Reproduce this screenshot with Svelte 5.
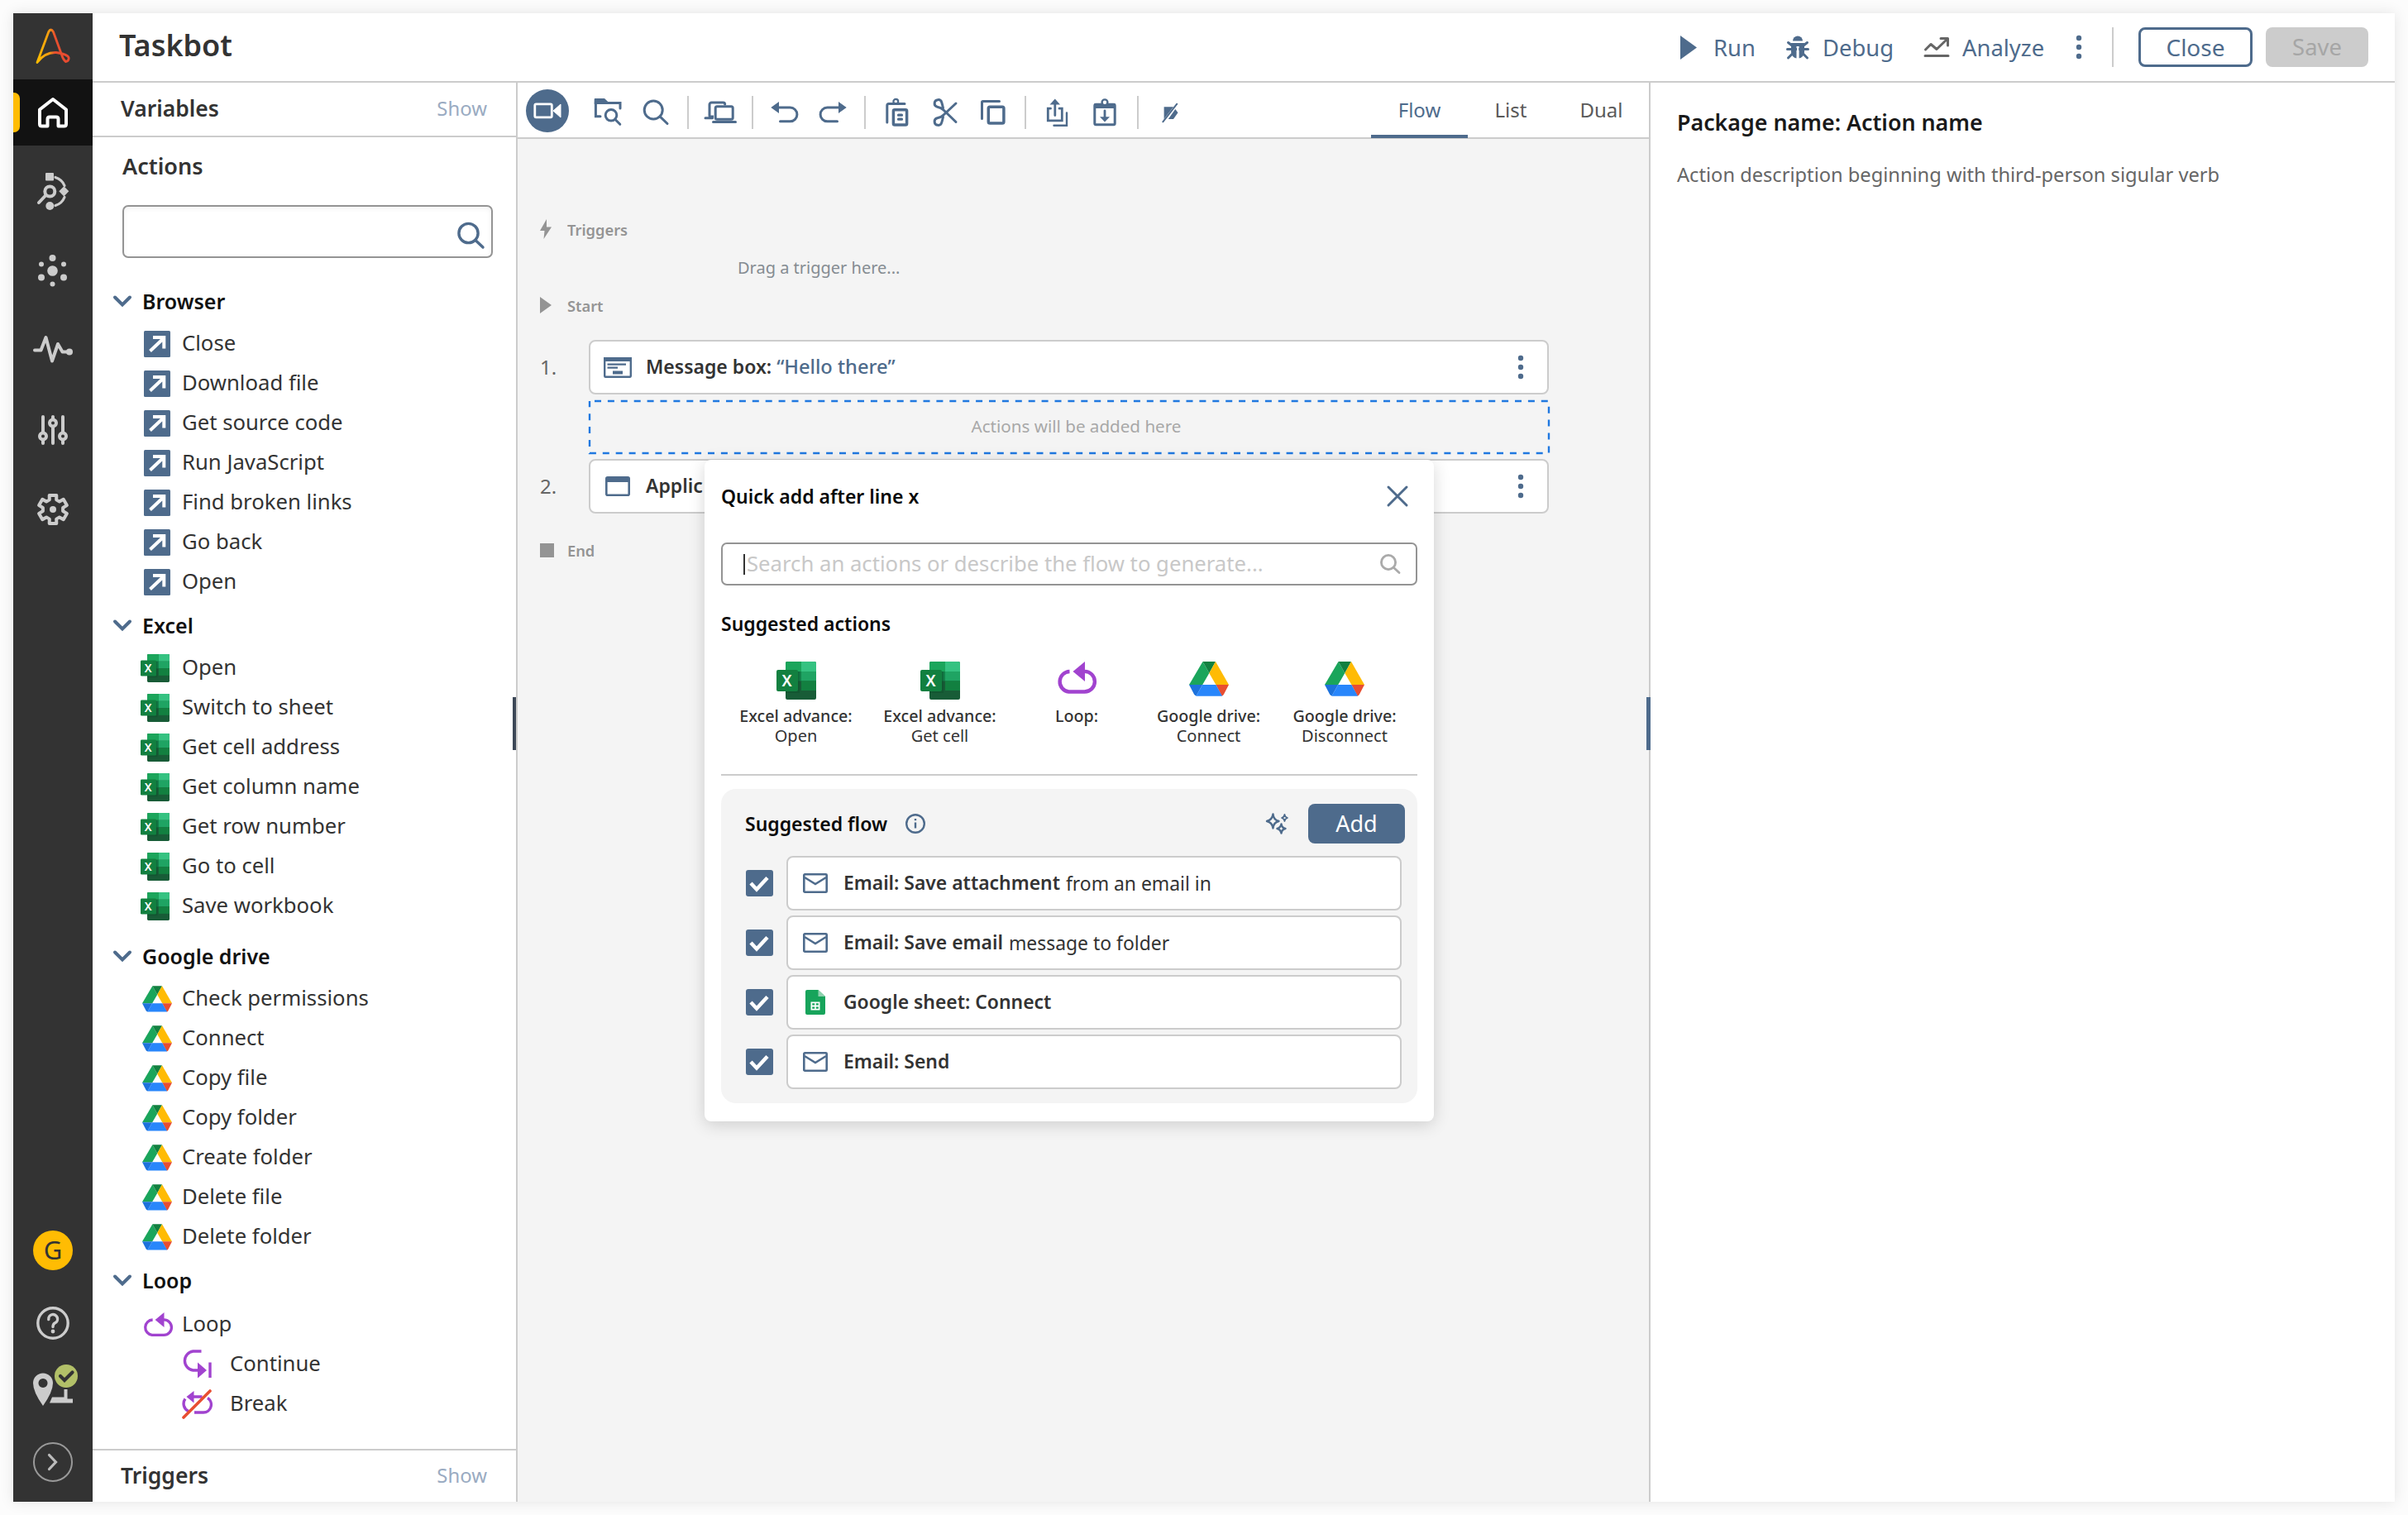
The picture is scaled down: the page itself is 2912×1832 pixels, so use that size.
<script lang="ts">
    type Group = { name: string; icon: string; items: string[] };

    const groups: Group[] = [
        {
            name: "Browser",
            icon: "browser",
            items: [
                "Close",
                "Download file",
                "Get source code",
                "Run JavaScript",
                "Find broken links",
                "Go back",
                "Open",
            ],
        },
        {
            name: "Excel",
            icon: "excel",
            items: [
                "Open",
                "Switch to sheet",
                "Get cell address",
                "Get column name",
                "Get row number",
                "Go to cell",
                "Save workbook",
            ],
        },
        {
            name: "Google drive",
            icon: "drive",
            items: [
                "Check permissions",
                "Connect",
                "Copy file",
                "Copy folder",
                "Create folder",
                "Delete file",
                "Delete folder",
            ],
        },
        { name: "Loop", icon: "loop", items: ["Loop", "Continue", "Break"] },
    ];

    const toolbar = [
        "folder", "search", "|", "devices", "|", "undo", "redo", "|",
        "paste", "cut", "copy", "|", "share", "import", "|", "novar",
    ];

    const suggestions = [
        { icon: "excel", pkg: "Excel advance:", action: "Open" },
        { icon: "excel", pkg: "Excel advance:", action: "Get cell" },
        { icon: "loop", pkg: "Loop:", action: "" },
        { icon: "drive", pkg: "Google drive:", action: "Connect" },
        { icon: "drive", pkg: "Google drive:", action: "Disconnect" },
    ];

    const flow = [
        { icon: "mail", title: "Email: Save attachment", rest: "from an email in" },
        { icon: "mail", title: "Email: Save email", rest: "message to folder" },
        { icon: "sheet", title: "Google sheet: Connect", rest: "" },
        { icon: "mail", title: "Email: Send", rest: "" },
    ];

    const tabs = ["Flow", "List", "Dual"];
    let activeTab = $state("Flow");
    let checked = $state([true, true, true, true]);

    // Six-toothed cog outline around (20, 21)
    const cog = Array.from({ length: 6 }, (_, i) => {
        const at = (r: number, deg: number) => {
            const a = ((i * 60 - 90 + deg) * Math.PI) / 180;
            return `${(20 + r * Math.cos(a)).toFixed(1)},${(21 + r * Math.sin(a)).toFixed(1)}`;
        };
        return [at(12.3, -20), at(17.6, -14), at(17.6, 14), at(12.3, 20)].join(" ");
    }).join(" ");
</script>

{#snippet excel()}
    <svg class="excel" viewBox="0 0 48 46" preserveAspectRatio="none">
        <rect x="11" width="37" height="46" rx="2" fill="#185c37" />
        <path d="M13 0H30V12H11V2a2 2 0 0 1 2-2z" fill="#1ba55b" />
        <path d="M30 0h16a2 2 0 0 1 2 2v10H30z" fill="#35c281" />
        <path d="M11 12h19v11.500H11z" fill="#13814a" />
        <path d="M30 12h18v11.500H30z" fill="#1fa463" />
        <path d="M30 23.500h18v11.500H30z" fill="#128040" />
        <path d="M11 12h17v26H11z" fill="#0c4a29" opacity="0.4" />
        <rect y="10" width="26" height="26" rx="2" fill="#128040" />
        <text x="12.500" y="30" text-anchor="middle">X</text>
    </svg>
{/snippet}

{#snippet drive()}
    <svg class="drive" viewBox="0 0 48 42">
        <path d="M16.500 0 24.300 14 16.200 28H0z" fill="#1aa55b" />
        <path d="M16.500 0H32L24.300 14z" fill="#128040" />
        <path d="M32 0 48 28H32.400L24.300 14z" fill="#ffbb04" />
        <path d="M32.400 28H48L42 39.500q-1 2-2.500 2z" fill="#e84e31" />
        <path d="M0 28H16.200L8.600 41.500Q7 41 6 39.500z" fill="#1d72dc" />
        <path d="M16.200 28H32.400L40 41.700H8.400z" fill="#2886fb" />
    </svg>
{/snippet}

{#snippet loop()}
    <svg class="loop" viewBox="0 0 48 40">
        <path class="line" d="M15.500 12A12.300 12.300 0 0 0 14.400 36.500H33.600a12.300 12.300 0 0 0 0-24.600H31" />
        <path d="M19.500 12 34 0V24z" />
    </svg>
{/snippet}

{#snippet dots()}
    <svg class="dots" viewBox="0 0 8 30" width="8" height="30">
        <circle cx="4" cy="4" r="3.200" />
        <circle cx="4" cy="15" r="3.200" />
        <circle cx="4" cy="26" r="3.200" />
    </svg>
{/snippet}

{#snippet actionIcon(name: string, item: string)}
    {#if name === "excel"}
        {@render excel()}
    {:else if name === "drive"}
        {@render drive()}
    {:else if name === "browser"}
        <svg viewBox="0 0 32 32" width="32" height="32">
            <rect width="32" height="32" rx="1.500" fill="#4e6b8c" />
            <path d="M7.500 24.500 24 9M11 8H24.300V21.500" fill="none" stroke="#fff" stroke-width="4" />
        </svg>
    {:else if item === "Continue"}
        <svg class="purple" viewBox="0 0 36 36" width="36" height="36">
            <path class="line" d="M23.500 2H13.500a11.600 11.600 0 0 0 0 23H20M34 15.500V34" />
            <path d="M19 15.500V34.500L30 25z" />
        </svg>
    {:else if item === "Break"}
        <svg class="purple" viewBox="0 0 36 36" width="36" height="36">
            <path class="line" d="M13 9H24.500M4 11.500a10 10 0 0 0 4 15M31 10.500a9.500 9.500 0 0 1-5 17.500H15" />
            <path d="M5.500 9 14.500 2V16.500z" />
            <path d="M2 34 34 2" stroke="#e84e31" stroke-width="3.600" stroke-linecap="round" />
        </svg>
    {:else}
        {@render loop()}
    {/if}
{/snippet}

{#snippet toolIcon(name: string)}
    <svg class="tool-icon" viewBox="0 0 36 36" width="36" height="36">
        {#if name === "folder"}
            <path d="M9 22.800H3.400V6.500H33V13" />
            <path class="solid" d="M1.700 2a1 1 0 0 1 1-1H14l4.200 4V8H1.700z" />
            <circle cx="22" cy="21.300" r="6.800" />
            <path d="M27 26.500 32.800 32.300" />
        {:else if name === "search"}
            <circle cx="15.200" cy="15" r="11" />
            <path d="M23 22.800 32 31.500" />
        {:else if name === "devices"}
            <path d="M5 22V8.500a2.500 2.500 0 0 1 2.500-2.500H21.500q2 0 2.200 2M0 24.700H8.500" />
            <rect x="12.200" y="10.800" width="21" height="15.500" rx="2" />
            <path d="M4 21.500h6v3H4z" class="solid" />
            <path d="M9.500 29.500H36.500" />
        {:else if name === "undo" || name === "redo"}
            <g transform={name === "redo" ? "matrix(-1 0 0 1 36 0)" : undefined}>
                <path d="M9 12H24.500a8.400 8.400 0 0 1 0 16.800H12.500" />
                <path class="solid" d="M1.300 12 11 5V19z" />
            </g>
        {:else if name === "paste"}
            <path d="M5.800 30V9.500q0-2 2-2H27" />
            <circle cx="16.300" cy="4.800" r="2.900" stroke-width="2.200" />
            <rect x="13.400" y="14.700" width="16.200" height="18.300" rx="1.500" stroke-width="3.500" />
            <path d="M19.500 21.200h4M19.500 26.200h4" stroke-width="3.200" />
        {:else if name === "cut"}
            <path d="M15.500 12.500Q14.500 8 13.800 6A4.400 4.400 0 1 0 8.500 11.300Q13 12 16 15L31 29.500" />
            <path d="M15.500 23.500Q14.500 28 13.800 30A4.400 4.400 0 1 1 8.500 24.700Q13 24 16 21L31 7" />
        {:else if name === "copy"}
            <path d="M4.500 25.500V5.800q0-1.300 1.300-1.300H25.500" />
            <rect x="12.300" y="11.300" width="18.600" height="19.800" rx="1.800" stroke-width="3.500" />
        {:else if name === "share"}
            <path d="M9.500 13.200H6.300V27.800H23.300V13.200H20M14.800 7V21.500" stroke-width="2.800" />
            <path d="M29 18.500V33.800H13.500" stroke-width="2.400" />
            <path class="solid" d="M8.500 8.500 14.800 1.500 21 8.500z" />
        {:else if name === "import"}
            <g transform="translate(-1 0)">
                <rect x="5.800" y="8.300" width="24.400" height="24.500" rx="1.500" />
                <path class="solid" d="M5 7.500h26V13H5z" />
                <circle cx="18" cy="5.800" r="3.400" fill="#fff" stroke-width="2.400" />
                <path d="M18 16V25" stroke-width="2.800" />
                <path class="solid" d="M12 23.200H24L18 29.500z" />
            </g>
        {:else}
            <path class="solid" d="M10.600 11.300H22L10.600 26z" />
            <path class="solid" d="M24.300 14 27.500 18.300 22 26H15.800z" />
            <path d="M9.300 29.300 26.300 7.700" stroke-width="2" />
        {/if}
    </svg>
{/snippet}

<div class="window">
    <nav class="rail">
        <div class="logo">
            <svg viewBox="40 31 48 50" width="48" height="50">
                <defs>
                    <linearGradient id="brand" gradientUnits="userSpaceOnUse" x1="44" y1="0" x2="84" y2="0">
                        <stop offset="0" stop-color="#ffbf00" />
                        <stop offset="0.400" stop-color="#f39a12" />
                        <stop offset="0.550" stop-color="#e8502e" />
                        <stop offset="1" stop-color="#e84a30" />
                    </linearGradient>
                </defs>
                <path
                    d="M45 75.500 58.800 38.500Q61.500 33.500 64.500 38.500L74.500 66Q76.500 72.500 79.500 74.500A3.800 3.800 0 0 0 82 68Q77 64.500 68 63.500 54 63 45 75.500z"
                    fill="none"
                    stroke="url(#brand)"
                    stroke-width="2.800"
                    stroke-linejoin="round"
                />
            </svg>
        </div>
        <div class="rail-item active">
            <svg viewBox="0 0 40 40" width="40" height="40">
                <path d="M4 16.500 20 4 36 16.500V34q0 2.500-2.500 2.500H26.500V28q0-2.500-2.500-2.500H16q-2.500 0-2.500 2.500V36.500H6.500Q4 36.500 4 34z" />
            </svg>
        </div>
        <div class="rail-item">
            <svg viewBox="0 0 40 46" width="40" height="46">
                <rect class="fill" x="11" y="0" width="10" height="9.500" rx="1" />
                <circle cx="16.300" cy="22.500" r="6" />
                <path d="M11.500 27 3 36" />
                <circle class="fill" cx="16.300" cy="40" r="5" />
                <path class="fill" d="M33.300 16.200 39.300 22.300 33.300 28.400 27.300 22.300z" />
                <path d="M23 5.500Q31 8 34 15.500M23 39.500Q31 37 34 29.500" stroke-width="3.200" />
            </svg>
        </div>
        <div class="rail-item">
            <svg class="filled" viewBox="0 0 36 38" width="36" height="38">
                <circle cx="17.500" cy="18.500" r="6.300" />
                <circle cx="17.500" cy="3" r="4" />
                <circle cx="17.500" cy="34.500" r="3" />
                <circle cx="4" cy="10.500" r="3" />
                <circle cx="31" cy="10.500" r="3" />
                <circle cx="4" cy="26.500" r="4" />
                <circle cx="31" cy="26.500" r="4" />
            </svg>
        </div>
        <div class="rail-item">
            <svg viewBox="0 0 48 38" width="48" height="38">
                <path d="M2 18.500H9.500L15.500 3 23 31.500 30 11 35.500 20.500H42" stroke-linejoin="round" />
                <circle class="fill" cx="44" cy="20.500" r="4" />
            </svg>
        </div>
        <div class="rail-item">
            <svg viewBox="0 0 36 38" width="36" height="38">
                <path d="M6 3V21M6 32V35M18 3V5M18 15V35M30 3V21M30 32V35" />
                <circle cx="6" cy="26.500" r="4" />
                <circle cx="18" cy="10.500" r="4" />
                <circle cx="30" cy="26.500" r="4" />
            </svg>
        </div>
        <div class="rail-item">
            <svg viewBox="0 0 40 42" width="40" height="42">
                <polygon points={cog} stroke-linejoin="round" />
                <circle class="fill" cx="20" cy="21" r="4" />
            </svg>
        </div>

        <div class="rail-bottom">
            <div class="avatar">G</div>
            <svg viewBox="0 0 40 40" width="40" height="40">
                <circle cx="20" cy="20" r="18.200" stroke-width="3.400" />
                <path d="M14.800 15.500A5.400 5.400 0 1 1 22.500 19.800Q20 21.200 20 24.500" stroke-width="3.400" />
                <circle class="fill" cx="20" cy="30" r="2.400" />
            </svg>
            <svg class="map" viewBox="0 0 54 50" width="54" height="50">
                <path class="fill" d="M12 50Q0 33 0 22.500a12 12 0 0 1 24 0Q24 33 12 50zM12 17a5.500 5.500 0 1 0 .01 0z" />
                <path class="fill" d="M23 39.500H37.500V30H41.500V41.500H48V46.500H20z" />
                <circle cx="40" cy="14" r="14" fill="#b2c068" stroke="none" />
                <path d="M33 14 38 19 47.500 9.500" stroke="#333" stroke-width="4.200" />
            </svg>
            <svg viewBox="0 0 48 48" width="48" height="48">
                <circle cx="24" cy="24" r="23" stroke="#999" stroke-width="2" />
                <path d="M19.500 15.500 27.500 24 19.500 32.500" stroke="#bbb" stroke-width="3.200" />
            </svg>
        </div>
    </nav>

    <div class="main">
        <header>
            <h1>Taskbot</h1>
            <div class="commands">
                <button class="command">
                    <svg viewBox="0 0 20 29" width="20" height="29"><path d="M0 0 20 14.500 0 29z" /></svg>
                    <span>Run</span>
                </button>
                <button class="command">
                    <svg viewBox="0 0 28 29" width="28" height="29">
                        <path d="M8 6.500a6 6 0 0 1 12 0z" />
                        <path d="M6 9H22V20q-1 7-6.500 7.500V13h-3V27.500Q7 27 6 20z" />
                        <path class="leg" d="M2.500 8.500 7 12M25.500 8.500 21 12M1.500 16.500H26.500M2.500 27 8 21.500M25.500 27 20 21.500" />
                        <path d="M13 13h2.200v14.800H13z" fill="#fff" />
                    </svg>
                    <span>Debug</span>
                </button>
                <button class="command">
                    <svg class="trend" viewBox="0 0 30 24" width="30" height="24">
                        <path d="M1.500 15 8 8.500 15 14.500 27.500 2.500M20 1.500H28.500V10M1 22.500H29" />
                    </svg>
                    <span>Analyze</span>
                </button>
                {@render dots()}
                <i class="rule"></i>
                <button class="button outline">Close</button>
                <button class="button disabled">Save</button>
            </div>
        </header>

        <div class="columns">
            <aside class="palette">
                <div class="section-bar variables">
                    <h2>Variables</h2>
                    <span>Show</span>
                </div>
                <div class="actions">
                    <h2>Actions</h2>
                    <div class="search">
                        <svg viewBox="0 0 33 32" width="33" height="32">
                            <circle cx="13.500" cy="13" r="11.600" />
                            <path d="M22 21.500 31 30" />
                        </svg>
                    </div>
                    {#each groups as group (group.name)}
                        <section class="group {group.icon}-group">
                            <h3>
                                <svg viewBox="0 0 22 15" width="22" height="15"><path d="M2 2.500 11 11.500 20 2.500" /></svg>
                                {group.name}
                            </h3>
                            <ul>
                                {#each group.items as item, i}
                                    <li class:nested={group.icon === "loop" && i > 0}>
                                        <span class="icon">{@render actionIcon(group.icon, item)}</span>
                                        {item}
                                    </li>
                                {/each}
                            </ul>
                        </section>
                    {/each}
                </div>
                <div class="section-bar triggers">
                    <h2>Triggers</h2>
                    <span>Show</span>
                </div>
                <i class="grip left"></i>
            </aside>

            <div class="editor">
                <div class="toolbar">
                    <div class="record">
                        <svg viewBox="0 0 34 20" width="34" height="20">
                            <rect x="1.800" y="1.800" width="20.500" height="16" rx="1.500" fill="none" stroke="#fff" stroke-width="2.800" />
                            <path d="M24 10 33 2V18z" fill="#fff" stroke="#fff" stroke-linejoin="round" />
                        </svg>
                    </div>
                    {#each toolbar as tool}
                        {#if tool === "|"}
                            <i class="rule"></i>
                        {:else}
                            <button class="tool">{@render toolIcon(tool)}</button>
                        {/if}
                    {/each}
                    <div class="tabs">
                        {#each tabs as tab}
                            <button class:active={activeTab === tab} onclick={() => (activeTab = tab)}>{tab}</button>
                        {/each}
                    </div>
                </div>

                <div class="canvas">
                    <div class="marker">
                        <svg viewBox="0 0 14 24" width="14" height="24"><path d="M8 0 0 14H5.500L4.500 24 14 9.500H8z" /></svg>
                        Triggers
                    </div>
                    <div class="marker hint">Drag a trigger here...</div>
                    <div class="marker">
                        <svg viewBox="0 0 14 20" width="14" height="20"><path d="M0 0 14 10 0 20z" /></svg>
                        Start
                    </div>
                    <div class="lines">
                        <span class="number">1.</span>
                        <div class="node">
                            <svg viewBox="0 0 34 25" width="34" height="25">
                                <rect x="1.200" y="1.200" width="31.600" height="22.600" rx="1" fill="#fff" stroke="#4e6b8c" stroke-width="2.400" />
                                <path d="M0 0H34V5H0z" />
                                <path d="M4.500 7.500H27V9.800H4.500zM4.500 11.500H17V13.800H4.500zM11 16.500H23V20.500H11z" />
                            </svg>
                            <b>Message box: <em>“Hello there”</em></b>
                            {@render dots()}
                        </div>
                        <div class="drop">
                            <svg><rect x="1" y="1" /></svg>
                            <span>Actions will be added here</span>
                        </div>
                        <span class="number">2.</span>
                        <div class="node second">
                            <svg viewBox="0 0 30 24" width="30" height="24">
                                <rect x="1.300" y="1.300" width="27.400" height="21.400" rx="1.500" fill="#fff" stroke="#4e6b8c" stroke-width="2.600" />
                                <path d="M1 1H29V7H1z" />
                            </svg>
                            <b>Applic</b>
                            {@render dots()}
                        </div>
                    </div>
                    <div class="marker end">
                        <svg viewBox="0 0 17 17" width="17" height="17"><path d="M0 0H17V17H0z" /></svg>
                        End
                    </div>

                    <div class="popup">
                        <div class="popup-head">
                            <h4>Quick add after line x</h4>
                            <svg viewBox="0 0 26 26" width="26" height="26"><path d="M2 2 24 24M24 2 2 24" /></svg>
                        </div>
                        <div class="prompt">
                            <i class="caret"></i>
                            <span>Search an actions or describe the flow to generate...</span>
                            <svg viewBox="0 0 25 24" width="25" height="24">
                                <circle cx="10" cy="10" r="8.600" />
                                <path d="M16.500 16.500 23 22.500" />
                            </svg>
                        </div>
                        <h4 class="suggested">Suggested actions</h4>
                        <div class="suggestions">
                            {#each suggestions as s}
                                <div class="suggestion">
                                    <div class="picture">{@render actionIcon(s.icon, "")}</div>
                                    <b>{s.pkg}</b>
                                    <span>{s.action}</span>
                                </div>
                            {/each}
                        </div>
                        <div class="flow-box">
                            <div class="flow-head">
                                <h4>Suggested flow</h4>
                                <svg class="info" viewBox="0 0 24 24" width="24" height="24">
                                    <circle cx="12" cy="12" r="10.800" />
                                    <path d="M12 10.500V17.500M12 6V8.200" />
                                </svg>
                                <svg class="sparkle" viewBox="0 0 28 28" width="28" height="28">
                                    <path d="M9.500 2.500Q10 9.500 16.500 11 10 12.500 9.500 19.500 8.500 12.500 2 11 8.500 9.500 9.500 2.500z" />
                                    <path d="M19.500 14.500Q20 19 24.500 20 20 21 19.500 25.500 18.500 21 14.500 20 18.500 19 19.500 14.500z" />
                                    <path class="thin" d="M23.500 3Q23.800 6 27 7 23.800 8 23.500 11 23 8 20 7 23 6 23.500 3z" />
                                </svg>
                                <button class="button primary">Add</button>
                            </div>
                            {#each flow as step, i}
                                <div class="step">
                                    <button class="check" aria-label={step.title} onclick={() => (checked[i] = !checked[i])}>
                                        {#if checked[i]}
                                            <svg viewBox="0 0 32 32" width="32" height="32"><path d="M6 16 13 23.500 26 9.500" /></svg>
                                        {/if}
                                    </button>
                                    <div class="step-card">
                                        <span class="icon">
                                            {#if step.icon === "mail"}
                                                <svg viewBox="0 0 30 24" width="30" height="24">
                                                    <rect x="1.300" y="1.300" width="27.400" height="21.400" rx="1" fill="none" stroke="#4e6b8c" stroke-width="2.600" />
                                                    <path d="M2 5 15 13 28 5" fill="none" stroke="#4e6b8c" stroke-width="2.600" />
                                                </svg>
                                            {:else}
                                                <svg viewBox="0 0 24 30" width="24" height="30">
                                                    <path d="M2 0H15.500L24 8V28a2 2 0 0 1-2 2H2a2 2 0 0 1-2-2V2A2 2 0 0 1 2 0z" fill="#17a45b" />
                                                    <path d="M15.500 0 24 8H15.500z" fill="#8ed1ae" />
                                                    <path d="M6.500 14.500h11v10h-11z" fill="#fff" />
                                                    <path d="M8.200 16.200H11.200V18.400H8.200zM12.800 16.200H15.800V18.400H12.800zM8.200 20.600H11.200V22.800H8.200zM12.800 20.600H15.800V22.800H12.800z" fill="#17a45b" />
                                                </svg>
                                            {/if}
                                        </span>
                                        <b>{step.title}</b>
                                        <span>{step.rest}</span>
                                    </div>
                                </div>
                            {/each}
                        </div>
                    </div>
                </div>
            </div>

            <aside class="details">
                <h2>Package name: Action name</h2>
                <p>Action description beginning with third-person sigular verb</p>
                <i class="grip right"></i>
            </aside>
        </div>
    </div>
</div>

<style>
    :global(body) {
        background: #fcfcfc;
    }

    .window {
        --blue: #4e6b8c;
        --line: #ccc;
        display: flex;
        width: 2880px;
        height: 1800px;
        margin: 16px;
        background: #fff;
        box-shadow: 0 0 16px rgba(0, 0, 0, 0.1);
        font-family: "Noto Sans", "Open Sans", sans-serif;
        font-size: 25.7px;
        color: #333;
        box-sizing: border-box;
    }

    .window :global(*) {
        box-sizing: border-box;
    }

    h1,
    h2,
    h3,
    h4,
    p,
    ul {
        margin: 0;
        padding: 0;
        list-style: none;
        font-weight: 600;
    }

    button {
        padding: 0;
        border: 0;
        background: none;
        font: inherit;
        color: inherit;
    }

    svg {
        flex: none;
        display: block;
        overflow: visible;
    }

    /* Rail */
    .rail {
        display: flex;
        flex-direction: column;
        width: 96px;
        background: #333;
    }

    .logo {
        display: grid;
        place-items: center;
        height: 80px;
    }

    .rail-item {
        display: grid;
        place-items: center;
        height: 96px;
    }

    .rail-item.active {
        position: relative;
        height: 80px;
        margin-bottom: 8px;
        background: #121212;
    }

    .rail-item.active::before {
        content: "";
        position: absolute;
        left: 0;
        top: 16px;
        width: 8px;
        height: 48px;
        border-radius: 0 7px 7px 0;
        background: #ffbc03;
    }

    .rail svg {
        fill: none;
        stroke: #ccc;
        stroke-width: 4;
        stroke-linecap: round;
    }

    .rail .active svg {
        stroke: #fff;
        stroke-linejoin: round;
    }

    .rail .fill,
    .rail .filled circle {
        fill: #ccc;
        stroke: none;
    }

    .rail-bottom {
        display: flex;
        flex-direction: column;
        align-items: center;
        margin-top: auto;
        padding-bottom: 24px;
    }

    .avatar {
        width: 48px;
        height: 48px;
        margin-bottom: 44px;
        border-radius: 50%;
        background: #ffbc03;
        font-size: 31px;
        line-height: 47px;
        text-align: center;
    }

    .rail .map {
        margin: 30px 18px 44px 24px;
    }

    /* Header */
    .main {
        display: flex;
        flex-direction: column;
        flex: 1;
        min-width: 0;
    }

    header {
        display: flex;
        align-items: center;
        justify-content: space-between;
        height: 84px;
        padding: 0 32px;
        border-bottom: 2px solid var(--line);
    }

    h1 {
        padding-bottom: 5px;
        font-size: 36px;
    }

    .commands {
        display: grid;
        grid-template-columns: 128px 167px 171px 32px 56px 154px 124px;
        align-items: center;
        font-size: 27.4px;
        color: var(--blue);
    }

    .command {
        display: flex;
        align-items: center;
        fill: var(--blue);
    }

    .command span {
        margin-left: 16px;
    }

    .command:first-child span {
        margin-left: 20px;
    }

    .leg {
        stroke: var(--blue);
        stroke-width: 3;
        stroke-linecap: round;
    }

    .trend {
        fill: none;
        stroke: #666;
        stroke-width: 3;
        stroke-linejoin: round;
        stroke-linecap: round;
    }

    .dots {
        justify-self: center;
        fill: var(--blue);
    }

    .rule {
        width: 2px;
        height: 48px;
        background: var(--line);
    }

    .commands .rule {
        margin-left: 24px;
    }

    .button {
        height: 48px;
        border-radius: 8px;
        line-height: 46px;
    }

    .outline {
        width: 138px;
        border: 3px solid var(--blue);
        line-height: 42px;
        font-size: 28px;
    }

    .disabled {
        background: #ccc;
        color: #a6a6a6;
    }

    .primary {
        width: 117px;
        background: var(--blue);
        color: #fff;
        font-size: 27px;
    }

    /* Left palette */
    .columns {
        display: flex;
        flex: 1;
        min-height: 0;
    }

    .palette,
    .details {
        position: relative;
    }

    .palette {
        display: flex;
        flex-direction: column;
        width: 514px;
        border-right: 2px solid var(--line);
    }

    h2 {
        font-size: 26.5px;
    }

    .section-bar {
        display: flex;
        align-items: center;
        justify-content: space-between;
        padding: 0 35px 3px 34px;
    }

    .section-bar span {
        font-size: 23.9px;
        color: #9aabc2;
    }

    .variables {
        height: 66px;
        border-bottom: 2px solid var(--line);
    }

    .triggers {
        height: 64px;
        border-top: 2px solid var(--line);
    }

    .actions {
        flex: 1;
        padding: 16px 28px 0 25px;
    }

    .actions h2 {
        padding-left: 11px;
        font-size: 27px;
        line-height: 37px;
    }

    .search {
        display: flex;
        justify-content: flex-end;
        height: 64px;
        margin: 29px 0 26px 11px;
        padding: 19px 8px 0 0;
        border: 2px solid #949494;
        border-radius: 7px;
        box-shadow: inset 0 2px 6px rgba(0, 0, 0, 0.06);
    }

    .search svg,
    h3 svg {
        fill: none;
        stroke: var(--blue);
        stroke-width: 3.4;
        stroke-linecap: round;
    }

    h3 {
        display: flex;
        align-items: center;
        height: 52px;
        font-size: 25px;
        color: #111;
    }

    h3 svg {
        margin-right: 13px;
        stroke-width: 4;
    }

    .excel-group {
        margin-top: 4px;
    }

    .drive-group {
        margin-top: 12px;
    }

    .loop-group {
        margin-top: 4px;
    }

    .loop-group ul {
        padding-top: 2px;
    }

    li {
        display: flex;
        align-items: center;
        height: 48px;
        padding-left: 32px;
        font-weight: 400;
        white-space: nowrap;
    }

    li .icon {
        display: flex;
        justify-content: center;
        width: 42px;
        margin-right: 9px;
        padding-top: 4px;
    }

    li.nested {
        padding-left: 80px;
    }

    li.nested .icon {
        margin-right: 19px;
    }

    li .excel {
        width: 35px;
        height: 34px;
        margin-left: -6px;
    }

    li .drive {
        width: 36px;
        height: 32px;
    }

    li .loop {
        width: 36px;
        height: 30px;
        margin-left: 2px;
    }

    .excel text {
        font: 600 19px "Noto Sans", sans-serif;
        fill: #fff;
    }

    .loop,
    .purple {
        fill: #a143cf;
    }

    .loop .line,
    .purple .line {
        fill: none;
        stroke: #a143cf;
        stroke-width: 4.4;
    }

    .purple .line {
        stroke-width: 3.4;
    }

    .grip {
        position: absolute;
        top: 743px;
        width: 4px;
        height: 64px;
        background: #3c4757;
    }

    .grip.left {
        right: 0;
    }

    .grip.right {
        left: -5px;
        width: 5px;
        background: var(--blue);
    }

    /* Toolbar */
    .editor {
        display: flex;
        flex-direction: column;
        width: 1368px;
    }

    .toolbar {
        display: flex;
        align-items: center;
        height: 68px;
        padding-left: 10px;
        border-bottom: 2px solid var(--line);
    }

    .toolbar .rule {
        height: 40px;
        margin: 6px 9px 0;
    }

    .record {
        display: grid;
        place-items: center;
        width: 52px;
        height: 52px;
        margin-top: 2px;
        margin-right: 18px;
        border-radius: 50%;
        background: var(--blue);
    }

    .tool {
        display: flex;
        justify-content: center;
        width: 58px;
        padding-top: 6px;
    }

    .tool-icon {
        fill: none;
        stroke: var(--blue);
        stroke-width: 3;
        stroke-linecap: round;
    }

    .tool-icon .solid {
        fill: var(--blue);
        stroke: none;
    }

    .tabs {
        display: grid;
        grid-template-columns: 117px 104px 115px;
        height: 68px;
        margin-left: auto;
        font-size: 24px;
        color: #5a5a5a;
    }

    .tabs button {
        height: 68px;
        padding-top: 3px;
        border-bottom: 4px solid transparent;
    }

    .tabs .active {
        border-color: var(--blue);
        color: var(--blue);
    }

    /* Canvas */
    .canvas {
        position: relative;
        flex: 1;
        padding: 86px 0 0 27px;
        background: #f4f4f4;
    }

    .marker {
        display: flex;
        align-items: center;
        height: 46px;
        font-size: 18.3px;
        font-weight: 600;
        color: #949494;
    }

    .marker svg {
        margin-right: 19px;
        fill: #949494;
    }

    .marker.hint {
        padding-left: 239px;
        font-size: 20px;
        font-weight: 400;
        color: #858c92;
    }

    .marker.end {
        margin-top: 21px;
    }

    .marker.end svg {
        margin-right: 16px;
    }

    .lines {
        display: grid;
        grid-template-columns: 59px 1161px;
        row-gap: 6px;
        align-items: center;
        margin-top: 19px;
    }

    .number {
        padding-bottom: 2px;
        font-size: 24px;
        color: #666;
    }

    .node {
        display: flex;
        align-items: center;
        height: 66px;
        padding: 0 28px 0 16px;
        border: 2px solid var(--line);
        border-radius: 8px;
        background: #fff;
        fill: var(--blue);
        font-size: 23px;
    }

    .node b {
        flex: 1;
        margin-left: 17px;
        padding-bottom: 2px;
        font-weight: 600;
    }

    .node em {
        font-style: normal;
        font-weight: 500;
        font-size: 23.7px;
        color: var(--blue);
    }

    .node.second {
        padding-left: 18px;
    }

    .node.second b {
        margin-left: 19px;
    }

    .drop {
        display: grid;
        grid-column: 2;
        place-items: center;
        height: 66px;
        font-size: 20.6px;
        color: #a8a8a8;
    }

    .drop svg,
    .drop span {
        grid-area: 1 / 1;
    }

    .drop span {
        padding: 0 0 3px 17px;
    }

    .drop svg {
        width: 1162px;
        height: 65px;
    }

    .drop rect {
        width: 1160px;
        height: 63px;
        fill: none;
        stroke: #1f78e0;
        stroke-width: 2.4;
        stroke-dasharray: 8 7.9;
        stroke-dashoffset: -6;
    }

    /* Quick add popup */
    .popup {
        position: absolute;
        left: 226px;
        top: 388px;
        width: 882px;
        height: 800px;
        padding: 0 20px;
        border-radius: 8px;
        background: #fff;
        box-shadow: 0 4px 20px rgba(0, 0, 0, 0.16);
    }

    h4 {
        font-size: 23px;
        color: #0a0a0a;
    }

    .popup-head {
        display: flex;
        align-items: center;
        justify-content: space-between;
        height: 87px;
        padding: 0 11px 0 0;
        stroke: var(--blue);
        stroke-width: 3;
        stroke-linecap: round;
    }

    .popup-head h4,
    .flow-head h4 {
        stroke: none;
    }

    .prompt {
        display: flex;
        align-items: center;
        height: 52px;
        margin-top: 13px;
        padding: 0 18px 0 25px;
        border: 2.5px solid #949494;
        border-radius: 7px;
        color: #c8c8c8;
        fill: none;
        stroke: #aaa;
        stroke-width: 2.8;
        stroke-linecap: round;
    }

    .prompt span {
        flex: 1;
        margin-left: 2px;
        padding-bottom: 2px;
    }

    .caret {
        width: 2px;
        height: 25px;
        background: #333;
    }

    .suggested {
        margin: 30px 0 0;
        line-height: 32px;
    }

    .suggestions {
        display: grid;
        grid-template-columns: 137px 137px 120px 125px 130px;
        column-gap: 37px;
        height: 138px;
        padding-left: 22px;
        border-bottom: 2px solid var(--line);
        margin-top: 30px;
        font-size: 20px;
        line-height: 24px;
    }

    .suggestion {
        display: flex;
        flex-direction: column;
        align-items: center;
        white-space: nowrap;
    }

    .suggestion b {
        font-size: 19.7px;
        font-weight: 500;
    }

    .picture {
        height: 54px;
    }

    .picture .excel {
        width: 48px;
        height: 46px;
    }

    .picture .drive {
        width: 48px;
        height: 42px;
    }

    .picture .loop {
        width: 48px;
        height: 40px;
    }

    .flow-box {
        height: 380px;
        margin-top: 16px;
        padding: 18px 15px 0 29px;
        border-radius: 18px;
        background: #f4f4f4;
    }

    .flow-head {
        display: flex;
        align-items: center;
        margin-bottom: 15px;
        fill: none;
        stroke: var(--blue);
        stroke-width: 2.4;
        stroke-linejoin: round;
    }

    .info {
        margin-left: 22px;
    }

    .sparkle {
        margin: 0 24px 0 auto;
    }

    .sparkle .thin {
        stroke-width: 1.8;
    }

    .step {
        display: flex;
        align-items: center;
        height: 66px;
        margin-bottom: 6px;
    }

    .check {
        width: 33px;
        height: 32px;
        margin-left: 1px;
        border-radius: 3px;
        background: var(--blue);
        fill: none;
        stroke: #fff;
        stroke-width: 4.5;
    }

    .step-card {
        display: flex;
        align-items: center;
        width: 744px;
        height: 66px;
        margin-left: 16px;
        padding-left: 18px;
        border: 2px solid var(--line);
        border-radius: 8px;
        background: #fff;
        font-size: 22.9px;
    }

    .step-card .icon {
        display: flex;
        justify-content: center;
        width: 30px;
        margin-right: 19px;
    }

    .step-card b {
        margin-right: 7px;
        padding-bottom: 1px;
        font-weight: 600;
    }

    /* Right panel */
    .details {
        flex: 1;
        padding: 29px 32px;
        border-left: 2px solid var(--line);
    }

    .details h2 {
        font-size: 26.8px;
        line-height: 37px;
        color: #1a1a1a;
    }

    .details p {
        margin-top: 29px;
        font-size: 23.65px;
        font-weight: 400;
        line-height: 32px;
        color: #666;
    }
</style>
